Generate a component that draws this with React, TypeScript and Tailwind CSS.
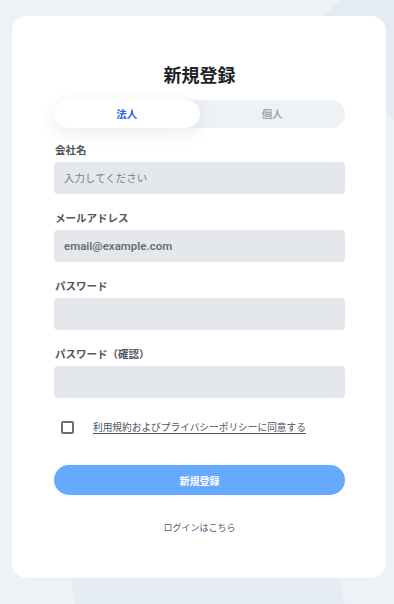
import { useState } from "react";

const jp = "font-['Noto_Sans_CJK_JP','Noto_Sans',sans-serif]";

function Field({
  label,
  placeholder,
  value,
  type = "text",
}: {
  label: string;
  placeholder?: string;
  value?: string;
  type?: string;
}) {
  return (
    <div className="flex flex-col">
      <label className="text-[10.5px] leading-4 font-bold text-[#4f5661] mb-1 pl-px">{label}</label>
      <input
        type={type}
        defaultValue={value}
        placeholder={placeholder}
        className="h-8 w-full rounded-[4px] bg-[#e4e8ed] px-[10px] text-[11.5px] font-semibold text-[#6b6f76] placeholder:text-[10.5px] placeholder:font-normal placeholder:text-[#7b8089] outline-none font-['Roboto','Noto_Sans_CJK_JP',sans-serif]"
      />
    </div>
  );
}

export default function App() {
  const [tab, setTab] = useState<"corp" | "personal">("corp");

  return (
    <div className={`relative min-h-[604px] w-full overflow-hidden bg-[#eef2f6] ${jp}`}>
      {/* background shapes */}
      <div className="absolute inset-0 bg-[#e5ebf3] [clip-path:polygon(340px_0,394px_0,394px_120px,300px_40px)]" />
      <div className="absolute inset-0 bg-[#e6ecf4] [clip-path:polygon(60px_500px,330px_540px,345px_604px,75px_604px)]" />

      <div className="relative pl-3 pr-2 pt-4 pb-[27px]">
        <div className="flex flex-col rounded-[15px] bg-white pl-[42px] pr-[41px] pt-[46px] pb-[42px]">
          <h1 className="text-center text-[18px] leading-6 font-bold text-[#1f2329] mb-[14px]">新規登録</h1>

          <div className="flex h-7 rounded-full bg-[#eef2f6]">
            <button
              onClick={() => setTab("corp")}
              className={`flex-1 rounded-full text-[10.5px] font-bold ${
                tab === "corp"
                  ? "bg-white text-[#2563eb] shadow-[0_4px_18px_rgba(30,40,60,0.09)]"
                  : "text-[#a0a6ae]"
              }`}
            >
              法人
            </button>
            <button
              onClick={() => setTab("personal")}
              className={`flex-1 rounded-full text-[10.5px] font-bold ${
                tab === "personal"
                  ? "bg-white text-[#2563eb] shadow-[0_4px_18px_rgba(30,40,60,0.09)]"
                  : "text-[#a0a6ae]"
              }`}
            >
              個人
            </button>
          </div>

          <div className="mt-[14px] flex flex-col gap-4">
            <Field label="会社名" placeholder="入力してください" />
            <Field label="メールアドレス" value="email@example.com" />
            <Field label="パスワード" type="password" />
            <Field label="パスワード（確認）" type="password" />
          </div>

          <label className="mt-[21px] flex items-center gap-[19px] pl-[7px]">
            <input
              type="checkbox"
              className="h-[13px] w-[13px] appearance-none rounded-[2px] border-2 border-[#6f6f6f] bg-white"
            />
            <span className="text-[9.7px] leading-4 text-[#4b5563] underline underline-offset-2">
              利用規約およびプライバシーポリシーに同意する
            </span>
          </label>

          <button className="mt-[30px] h-[30px] w-full rounded-full bg-[#66aaff] text-[10px] font-bold text-white">
            新規登録
          </button>

          <a href="#" className="mt-[25px] text-center text-[9px] leading-4 text-[#4f5a78]">
            ログインはこちら
          </a>
        </div>
      </div>
    </div>
  );
}
